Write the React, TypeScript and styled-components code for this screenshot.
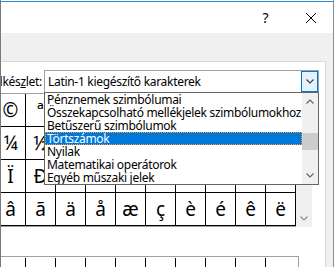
import styled, { createGlobalStyle } from 'styled-components';

const SUBSETS = [
  'Pénznemek szimbólumai',
  'Összekapcsolható mellékjelek szimbólumokhoz',
  'Betűszerű szimbólumok',
  'Törtszámok',
  'Nyilak',
  'Matematikai operátorok',
  'Egyéb műszaki jelek',
];
const SELECTED = 3;

const ROWS = [
  ['©', 'ª', '«', '¬', '-', '®', '¯', '°', '±', '²'],
  ['¼', '½', '¾', '¿', 'À', 'Á', 'Â', 'Ã', 'Ä', 'Å'],
  ['Ï', 'Ð', 'Ñ', 'Ò', 'Ó', 'Ô', 'Õ', 'Ö', '×', 'Ø'],
  ['â', 'ã', 'ä', 'å', 'æ', 'ç', 'è', 'é', 'ê', 'ë'],
];
const RECENT = ['α', 'π', 'µ', 'ω', 'ε', 'ν', '∑', 'α', 'ω', 'µ'];

const GlobalStyle = createGlobalStyle`
  html, body { margin: 0; padding: 0; background: #fff; overflow: hidden; }
  body { font-family: 'Noto Sans', 'Liberation Sans', sans-serif; color: #000; }
`;

const Window = styled.div`
  width: 334px;
  height: 267px;
  box-sizing: border-box;
  padding-top: 1px;
  border-left: 1px solid #7a7a7a;
  border-right: 1px solid #8c8c8c;
  background: #fff;
  display: flex;
  flex-direction: column;
  overflow: hidden;
`;

const TitleBar = styled.div`
  flex: none;
  height: 31px;
  border-top: 1px solid #2a8ad4;
  display: flex;
  justify-content: flex-end;
`;

const CaptionButton = styled.div`
  width: 45px;
  display: flex;
  align-items: center;
  justify-content: center;
  font-size: 14px;
  line-height: 1;
`;

const Body = styled.div`
  flex: 1;
  min-height: 0;
  background: #f0f0f0;
  padding: 28px 7px 0 0;
  display: flex;
`;

const Page = styled.div`
  flex: 1;
  background: #fff;
  border-top: 1px solid #d9d9d9;
  border-right: 1px solid #d9d9d9;
  display: flex;
  flex-direction: column;
`;

const SubsetRow = styled.div`
  position: relative;
  z-index: 2;
  margin-top: 8px;
  display: grid;
  grid-template-columns: 43px 275px;
  align-items: center;
  font-size: 12px;
  letter-spacing: -0.3px;
`;

const Label = styled.div`
  justify-self: end;
  white-space: nowrap;
  padding-right: 2px;
`;

const Combo = styled.div`
  position: relative;
  height: 23px;
  box-sizing: border-box;
  border: 1px solid #a0a0a0;
  background: #fff;
  display: flex;
`;

const ComboText = styled.div`
  flex: 1;
  padding-left: 3px;
  line-height: 21px;
  white-space: nowrap;
`;

const DropButton = styled.div`
  width: 17px;
  box-sizing: border-box;
  border: 1px solid #0078d7;
  background: #e5f1fb;
  display: flex;
  align-items: center;
  justify-content: center;
`;

const DropList = styled.div`
  position: absolute;
  top: 21px;
  left: -1px;
  right: -1px;
  border: 1px solid #646464;
  background: #fff;
  display: flex;
`;

const Items = styled.div`
  flex: 1;
  min-width: 0;
  overflow: hidden;
  display: flex;
  flex-direction: column;
`;

const Item = styled.div<{ $selected?: boolean }>`
  height: 13px;
  line-height: 13px;
  padding-left: 2px;
  white-space: nowrap;
  background: ${({ $selected }) => ($selected ? '#0078d7' : 'transparent')};
  color: ${({ $selected }) => ($selected ? '#fff' : '#000')};
  outline: ${({ $selected }) => ($selected ? '1px dotted #ff9a3c' : 'none')};
  outline-offset: -1px;
`;

const ScrollBar = styled.div`
  width: 16px;
  flex: none;
  background: #f0f0f0;
  display: flex;
  flex-direction: column;
`;

const ScrollArrow = styled.div`
  height: 17px;
  flex: none;
  display: flex;
  align-items: center;
  justify-content: center;
`;

const Track = styled.div`
  flex: 1;
`;

const Thumb = styled.div`
  margin-top: 23px;
  height: 17px;
  background: #cdcdcd;
`;

const GridRow = styled.div`
  display: flex;
  margin-left: -6px;
`;

const CharFrame = styled.div`
  border: 1px solid #a0a0a0;
  border-right: none;
  display: grid;
  grid-template-columns: repeat(10, 30px);
`;

const Cell = styled.div<{ $last?: boolean; $open?: boolean }>`
  height: 32px;
  box-sizing: content-box;
  display: flex;
  align-items: center;
  justify-content: center;
  border-right: ${({ $last }) => ($last ? 'none' : '1px solid #000')};
  border-bottom: ${({ $open }) => ($open ? 'none' : '1px solid #000')};
  font-size: 19px;
  line-height: 1;
`;

const GridScroll = styled(ScrollBar)`
  justify-content: flex-end;
`;

const RecentFrame = styled.div`
  margin: 29px 0 0 -6px;
  width: 302px;
  padding-top: 1px;
  border: 1px solid #a0a0a0;
  border-bottom: none;
  display: grid;
  grid-template-columns: repeat(9, 30px) 31px;
`;

const Chevron = ({ up, color }: { up?: boolean; color: string }) => (
  <svg width="8" height="5" viewBox="0 0 8 5">
    <path
      d={up ? 'M0.5 4.5 L4 1 L7.5 4.5' : 'M0.5 0.5 L4 4 L7.5 0.5'}
      fill="none"
      stroke={color}
      strokeWidth="1.1"
    />
  </svg>
);

const App = () => (
  <>
    <GlobalStyle />
    <Window>
      <TitleBar>
        <CaptionButton>?</CaptionButton>
        <CaptionButton>
          <svg width="10" height="10" viewBox="0 0 10 10">
            <path d="M0 0 L10 10 M10 0 L0 10" stroke="#000" strokeWidth="1" />
          </svg>
        </CaptionButton>
      </TitleBar>

      <Body>
        <Page>
          <SubsetRow>
            <Label>
              Alkés<u>z</u>let:
            </Label>
            <Combo>
              <ComboText>Latin-1 kiegészítő karakterek</ComboText>
              <DropButton>
                <Chevron color="#3c3c3c" />
              </DropButton>
              <DropList>
                <Items>
                  {SUBSETS.map((name, i) => (
                    <Item key={name} $selected={i === SELECTED}>
                      {name}
                    </Item>
                  ))}
                </Items>
                <ScrollBar>
                  <ScrollArrow>
                    <Chevron up color="#606060" />
                  </ScrollArrow>
                  <Track>
                    <Thumb />
                  </Track>
                  <ScrollArrow>
                    <Chevron color="#606060" />
                  </ScrollArrow>
                </ScrollBar>
              </DropList>
            </Combo>
          </SubsetRow>

          <GridRow>
            <CharFrame>
              {ROWS.flatMap((row, r) => row.map((ch, c) => <Cell key={`${r}-${c}`}>{ch}</Cell>))}
            </CharFrame>
            <GridScroll>
              <ScrollArrow>
                <Chevron color="#8a8a8a" />
              </ScrollArrow>
            </GridScroll>
          </GridRow>

          <RecentFrame>
            {RECENT.map((ch, c) => (
              <Cell key={c} $open $last={c === RECENT.length - 1}>
                {ch}
              </Cell>
            ))}
          </RecentFrame>
        </Page>
      </Body>
    </Window>
  </>
);

export default App;
